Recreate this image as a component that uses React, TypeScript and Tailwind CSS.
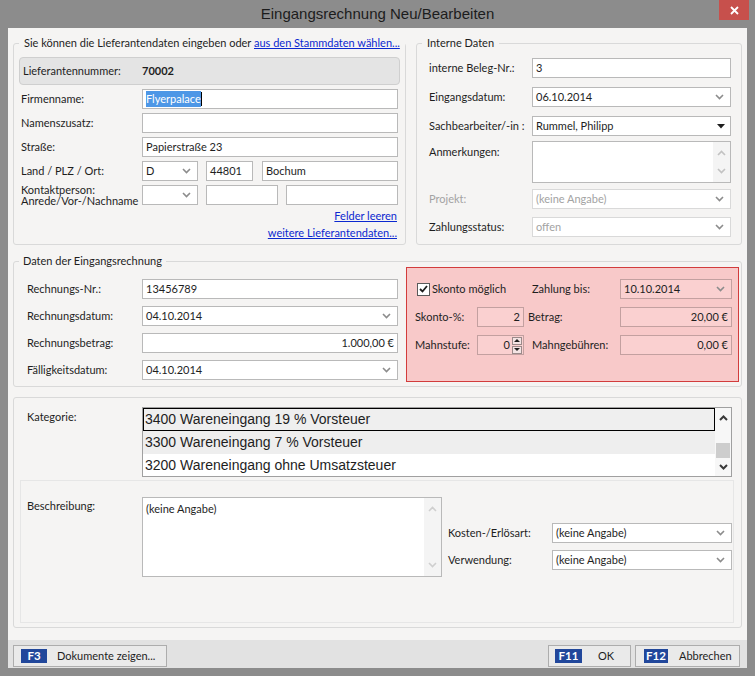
import type { ReactNode } from "react";

const field = "flex h-[20px] items-center border border-[#b9b9b9] bg-white px-[3px]";
const pinkField = "flex h-[20px] items-center border border-[#c3a0a0] bg-[#fad0d0] px-[3px]";

function Chevron({ up = false, color = "#8c8c8c", weight = 1.6 }: { up?: boolean; color?: string; weight?: number }) {
  return (
    <svg width="9" height="6" viewBox="0 0 9 6" className="block shrink-0">
      <path d={up ? "M1 5 L4.5 1.5 L8 5" : "M1 1 L4.5 4.5 L8 1"} fill="none" stroke={color} strokeWidth={weight} />
    </svg>
  );
}

function Select({ value, className = "", box = field, text = "" }: { value: string; className?: string; box?: string; text?: string }) {
  return (
    <div className={`${box} justify-between pr-[6px] ${className}`}>
      <span className={text}>{value}</span>
      <Chevron />
    </div>
  );
}

function ScrollArea({ children, className = "", arrow = "#c2c2c2" }: { children?: ReactNode; className?: string; arrow?: string }) {
  return (
    <div className={`flex border border-[#b9b9b9] bg-white ${className}`}>
      <div className="flex-1 px-[3px] pt-[3px]">{children}</div>
      <div className="flex w-[17px] flex-col items-center justify-between bg-[#f4f4f4] py-[8px]">
        <Chevron up color={arrow} />
        <Chevron color={arrow} />
      </div>
    </div>
  );
}

function Row({ label, w, children, className = "" }: { label: ReactNode; w: string; children: ReactNode; className?: string }) {
  return (
    <div className={`flex h-[20px] items-center ${className}`}>
      <div className={`shrink-0 whitespace-nowrap ${w}`}>{label}</div>
      {children}
    </div>
  );
}

function KeyButton({ k, label, className, badge, textCls }: { k: string; label: string; className: string; badge: string; textCls: string }) {
  return (
    <div className={`flex h-[22px] items-center whitespace-nowrap border border-[#adadad] bg-[#eaeaea] ${className}`}>
      <span className={`flex h-[14px] items-center justify-center bg-[#21479b] text-[11.5px] font-bold text-white ${badge}`}>{k}</span>
      <span className={textCls}>{label}</span>
    </div>
  );
}

export default function App() {
  return (
    <div className="flex h-[676px] w-[755px] flex-col bg-[#8c8c8c] font-['Lato','Liberation_Sans',Arial,sans-serif] text-[11px] text-[#1e1e1e]">
      {/* title bar */}
      <div className="relative flex h-[28px] items-center justify-center">
        <span className="font-['Liberation_Sans',Arial,sans-serif] text-[15px] text-[#1c1c1c]">Eingangsrechnung Neu/Bearbeiten</span>
        <button type="button" className="absolute right-[6px] top-0 flex h-[20px] w-[30px] items-center justify-center bg-[#c7504c]">
          <svg width="9" height="9" viewBox="0 0 9 9">
            <path d="M1 1 L8 8 M8 1 L1 8" stroke="white" strokeWidth="1.8" />
          </svg>
        </button>
      </div>

      <div className="mx-[8px] mb-[8px] flex flex-1 flex-col bg-[#f5f4f3]">
        <div className="flex-1 px-[5px] pt-[9px]">
          <div className="flex gap-[10px]">
            {/* Lieferant */}
            <fieldset className="h-[208px] w-[393px] min-w-0 shrink-0 rounded-[3px] border border-[#d9d9d9] px-[5px]">
              <legend className="whitespace-nowrap px-[5px] leading-[12px]">
                Sie können die Lieferantendaten eingeben oder{" "}
                <span className="text-[#0b28d0] underline">aus den Stammdaten wählen...</span>
              </legend>
              <div className="mt-[8px] flex h-[28px] items-center rounded-[4px] border border-[#cfcfcf] bg-[#e4e4e4] pl-[3px]">
                <span className="w-[119px]">Lieferantennummer:</span>
                <span className="font-bold">70002</span>
              </div>
              <div className="mt-[4px] flex flex-col gap-[4px]">
                <Row label="Firmenname:" w="w-[123px] pl-[2px]">
                  <div className={`${field} w-[256px] border-[#7eb4ea]`}>
                    <span className="bg-[#4d97e6] text-white">Flyerpalace</span>
                    <span className="h-[14px] w-px bg-black" />
                  </div>
                </Row>
                <Row label="Namenszusatz:" w="w-[123px] pl-[2px]">
                  <div className={`${field} w-[256px]`} />
                </Row>
                <Row label="Straße:" w="w-[123px] pl-[2px]">
                  <div className={`${field} w-[256px]`}>Papierstraße 23</div>
                </Row>
                <Row label="Land / PLZ / Ort:" w="w-[123px] pl-[2px]">
                  <Select value="D" className="w-[56px]" />
                  <div className={`${field} ml-[8px] w-[47px]`}>44801</div>
                  <div className={`${field} ml-[9px] w-[136px]`}>Bochum</div>
                </Row>
                <Row
                  label={
                    <div className="leading-[11px]">
                      Kontaktperson:
                      <br />
                      Anrede/Vor-/Nachname
                    </div>
                  }
                  w="w-[123px] pl-[2px]"
                >
                  <Select value="" className="w-[56px]" />
                  <div className={`${field} ml-[8px] w-[72px]`} />
                  <div className={`${field} ml-[8px] w-[112px]`} />
                </Row>
              </div>
              <div className="mt-[4px] flex flex-col items-end gap-[3px] pr-[3px] leading-[14px] text-[#0b28d0] underline">
                <span>Felder leeren</span>
                <span>weitere Lieferantendaten...</span>
              </div>
            </fieldset>

            {/* Interne Daten */}
            <fieldset className="h-[208px] w-[326px] min-w-0 shrink-0 rounded-[3px] border border-[#d9d9d9] px-[5px]">
              <legend className="px-[5px] leading-[12px]">Interne Daten</legend>
              <Row label="interne Beleg-Nr.:" w="w-[110px] pl-[7px]" className="mt-[9px]">
                <div className={`${field} w-[199px]`}>3</div>
              </Row>
              <Row label="Eingangsdatum:" w="w-[110px] pl-[7px]" className="mt-[9px]">
                <Select value="06.10.2014" className="w-[199px]" />
              </Row>
              <Row label="Sachbearbeiter/-in :" w="w-[110px] pl-[7px]" className="mt-[9px]">
                <div className={`${field} w-[199px] justify-between pr-[5px]`}>
                  <span>Rummel, Philipp</span>
                  <svg width="8" height="5" viewBox="0 0 8 5">
                    <path d="M0 0 H8 L4 4.5 Z" fill="#1e1e1e" />
                  </svg>
                </div>
              </Row>
              <div className="mt-[5px] flex">
                <div className="w-[110px] shrink-0 pl-[7px] pt-[3px]">Anmerkungen:</div>
                <ScrollArea className="h-[42px] w-[199px]" />
              </div>
              <Row label={<span className="text-[#a3a3a3]">Projekt:</span>} w="w-[110px] pl-[7px]" className="mt-[6px]">
                <Select value="(keine Angabe)" className="w-[199px] border-[#d9d9d9]" text="text-[#a3a3a3]" />
              </Row>
              <Row label="Zahlungsstatus:" w="w-[110px] pl-[7px]" className="mt-[8px]">
                <Select value="offen" className="w-[199px] border-[#d9d9d9] bg-[#efefef]" text="text-[#a3a3a3]" />
              </Row>
            </fieldset>
          </div>

          {/* Daten der Eingangsrechnung */}
          <fieldset className="mt-[10px] min-w-0 rounded-[3px] border border-[#d9d9d9] pb-[4px] pl-[5px] pr-[2px]">
            <legend className="px-[4px] leading-[12px]">Daten der Eingangsrechnung</legend>
            <div className="flex items-start">
              <div className="mt-[12px] flex flex-col gap-[7px]">
                <Row label="Rechnungs-Nr.:" w="w-[123px] pl-[8px]">
                  <div className={`${field} w-[256px]`}>13456789</div>
                </Row>
                <Row label="Rechnungsdatum:" w="w-[123px] pl-[8px]">
                  <Select value="04.10.2014" className="w-[256px]" />
                </Row>
                <Row label="Rechnungsbetrag:" w="w-[123px] pl-[8px]">
                  <div className={`${field} w-[256px] justify-end`}>1.000,00 €</div>
                </Row>
                <Row label="Fälligkeitsdatum:" w="w-[123px] pl-[8px]">
                  <Select value="04.10.2014" className="w-[256px]" />
                </Row>
              </div>

              <div className="ml-[8px] flex w-[333px] flex-col gap-[8px] border border-[#d23c3c] bg-[#f8c9c9] pb-[26px] pl-[8px] pt-[11px]">
                <div className="flex h-[20px] items-center whitespace-nowrap">
                  <div className="flex w-[117px] items-center pl-[2px]">
                    <span className="flex h-[13px] w-[13px] items-center justify-center border border-[#5a5a5a] bg-white">
                      <svg width="9" height="8" viewBox="0 0 9 8">
                        <path d="M1 4 L3.5 6.5 L8 1" fill="none" stroke="#1e1e1e" strokeWidth="1.8" />
                      </svg>
                    </span>
                    <span className="ml-[2px]">Skonto möglich</span>
                  </div>
                  <span className="w-[88px]">Zahlung bis:</span>
                  <Select value="10.10.2014" className="w-[112px]" box={pinkField} />
                </div>
                <div className="flex h-[20px] items-center whitespace-nowrap">
                  <span className="w-[62px]">Skonto-%:</span>
                  <div className={`${pinkField} w-[47px] justify-end`}>2</div>
                  <span className="ml-[4px] w-[92px]">Betrag:</span>
                  <div className={`${pinkField} w-[112px] justify-end`}>20,00 €</div>
                </div>
                <div className="flex h-[20px] items-center whitespace-nowrap">
                  <span className="w-[62px]">Mahnstufe:</span>
                  <div className={`${pinkField} w-[47px] justify-end pr-[1px]`}>
                    <span>0</span>
                    <div className="ml-[2px] flex flex-col gap-[1px]">
                      <span className="flex h-[8px] w-[10px] items-center justify-center border border-[#9a8a8a] bg-[#f4e4e4]">
                        <svg width="6" height="3" viewBox="0 0 6 3">
                          <path d="M0 3 L3 0 L6 3 Z" fill="#1e1e1e" />
                        </svg>
                      </span>
                      <span className="flex h-[8px] w-[10px] items-center justify-center border border-[#9a8a8a] bg-[#f4e4e4]">
                        <svg width="6" height="3" viewBox="0 0 6 3">
                          <path d="M0 0 L3 3 L6 0 Z" fill="#1e1e1e" />
                        </svg>
                      </span>
                    </div>
                  </div>
                  <span className="ml-[8px] w-[88px]">Mahngebühren:</span>
                  <div className={`${pinkField} w-[112px] justify-end`}>0,00 €</div>
                </div>
              </div>
            </div>
          </fieldset>

          {/* Kategorie / Beschreibung */}
          <div className="mt-[10px] rounded-[3px] border border-[#d9d9d9]">
            <div className="flex pl-[13px] pt-[9px]">
              <div className="w-[115px] shrink-0 pt-[2px]">Kategorie:</div>
              <div className="flex h-[70px] w-[590px] border border-[#a0a0a0] bg-white">
                <div className="flex min-w-0 flex-1 flex-col font-['Liberation_Sans',Arial,sans-serif] text-[14px]">
                  <div className="flex h-[23px] items-center border border-black bg-[#efefef] pl-[1px]">3400 Wareneingang 19 % Vorsteuer</div>
                  <div className="flex h-[23px] items-center bg-[#eeeeee] pl-[2px]">3300 Wareneingang 7 % Vorsteuer</div>
                  <div className="flex h-[22px] items-center pl-[2px]">3200 Wareneingang ohne Umsatzsteuer</div>
                </div>
                <div className="flex w-[16px] shrink-0 flex-col items-center bg-[#f7f7f7]">
                  <div className="flex h-[19px] items-center justify-center">
                    <Chevron up color="#3a3a3a" weight={2} />
                  </div>
                  <div className="mt-[16px] h-[15px] w-[14px] bg-[#cdcdcd]" />
                  <div className="flex flex-1 items-center justify-center">
                    <Chevron color="#3a3a3a" weight={2} />
                  </div>
                </div>
              </div>
            </div>
            <div className="mb-[4px] ml-[6px] mr-[7px] mt-[3px] flex border border-[#e6e6e6] pb-[45px] pl-[6px] pt-[16px]">
              <div className="w-[115px] shrink-0 pt-[1px]">Beschreibung:</div>
              <ScrollArea className="h-[80px] w-[300px]" arrow="#cfcfcf">
                (keine Angabe)
              </ScrollArea>
              <div className="ml-[6px] mt-[26px] flex flex-col gap-[7px]">
                <Row label="Kosten-/Erlösart:" w="w-[104px]">
                  <Select value="(keine Angabe)" className="w-[180px] bg-[#efefef]" />
                </Row>
                <Row label="Verwendung:" w="w-[104px]">
                  <Select value="(keine Angabe)" className="w-[180px] bg-[#efefef]" />
                </Row>
              </div>
            </div>
          </div>
        </div>

        {/* bottom bar */}
        <div className="flex h-[28px] items-start bg-[#e2e2e2] pl-[5px] pr-[7px] pt-[5px]">
          <KeyButton k="F3" label="Dokumente zeigen..." className="w-[154px]" badge="ml-[7px] w-[26px]" textCls="ml-[10px]" />
          <div className="flex-1" />
          <KeyButton k="F11" label="OK" className="w-[83px]" badge="ml-[6px] w-[27px]" textCls="flex-1 text-center" />
          <KeyButton k="F12" label="Abbrechen" className="ml-[4px] w-[105px]" badge="ml-[8px] w-[24px]" textCls="ml-[11px]" />
        </div>
      </div>
    </div>
  );
}
